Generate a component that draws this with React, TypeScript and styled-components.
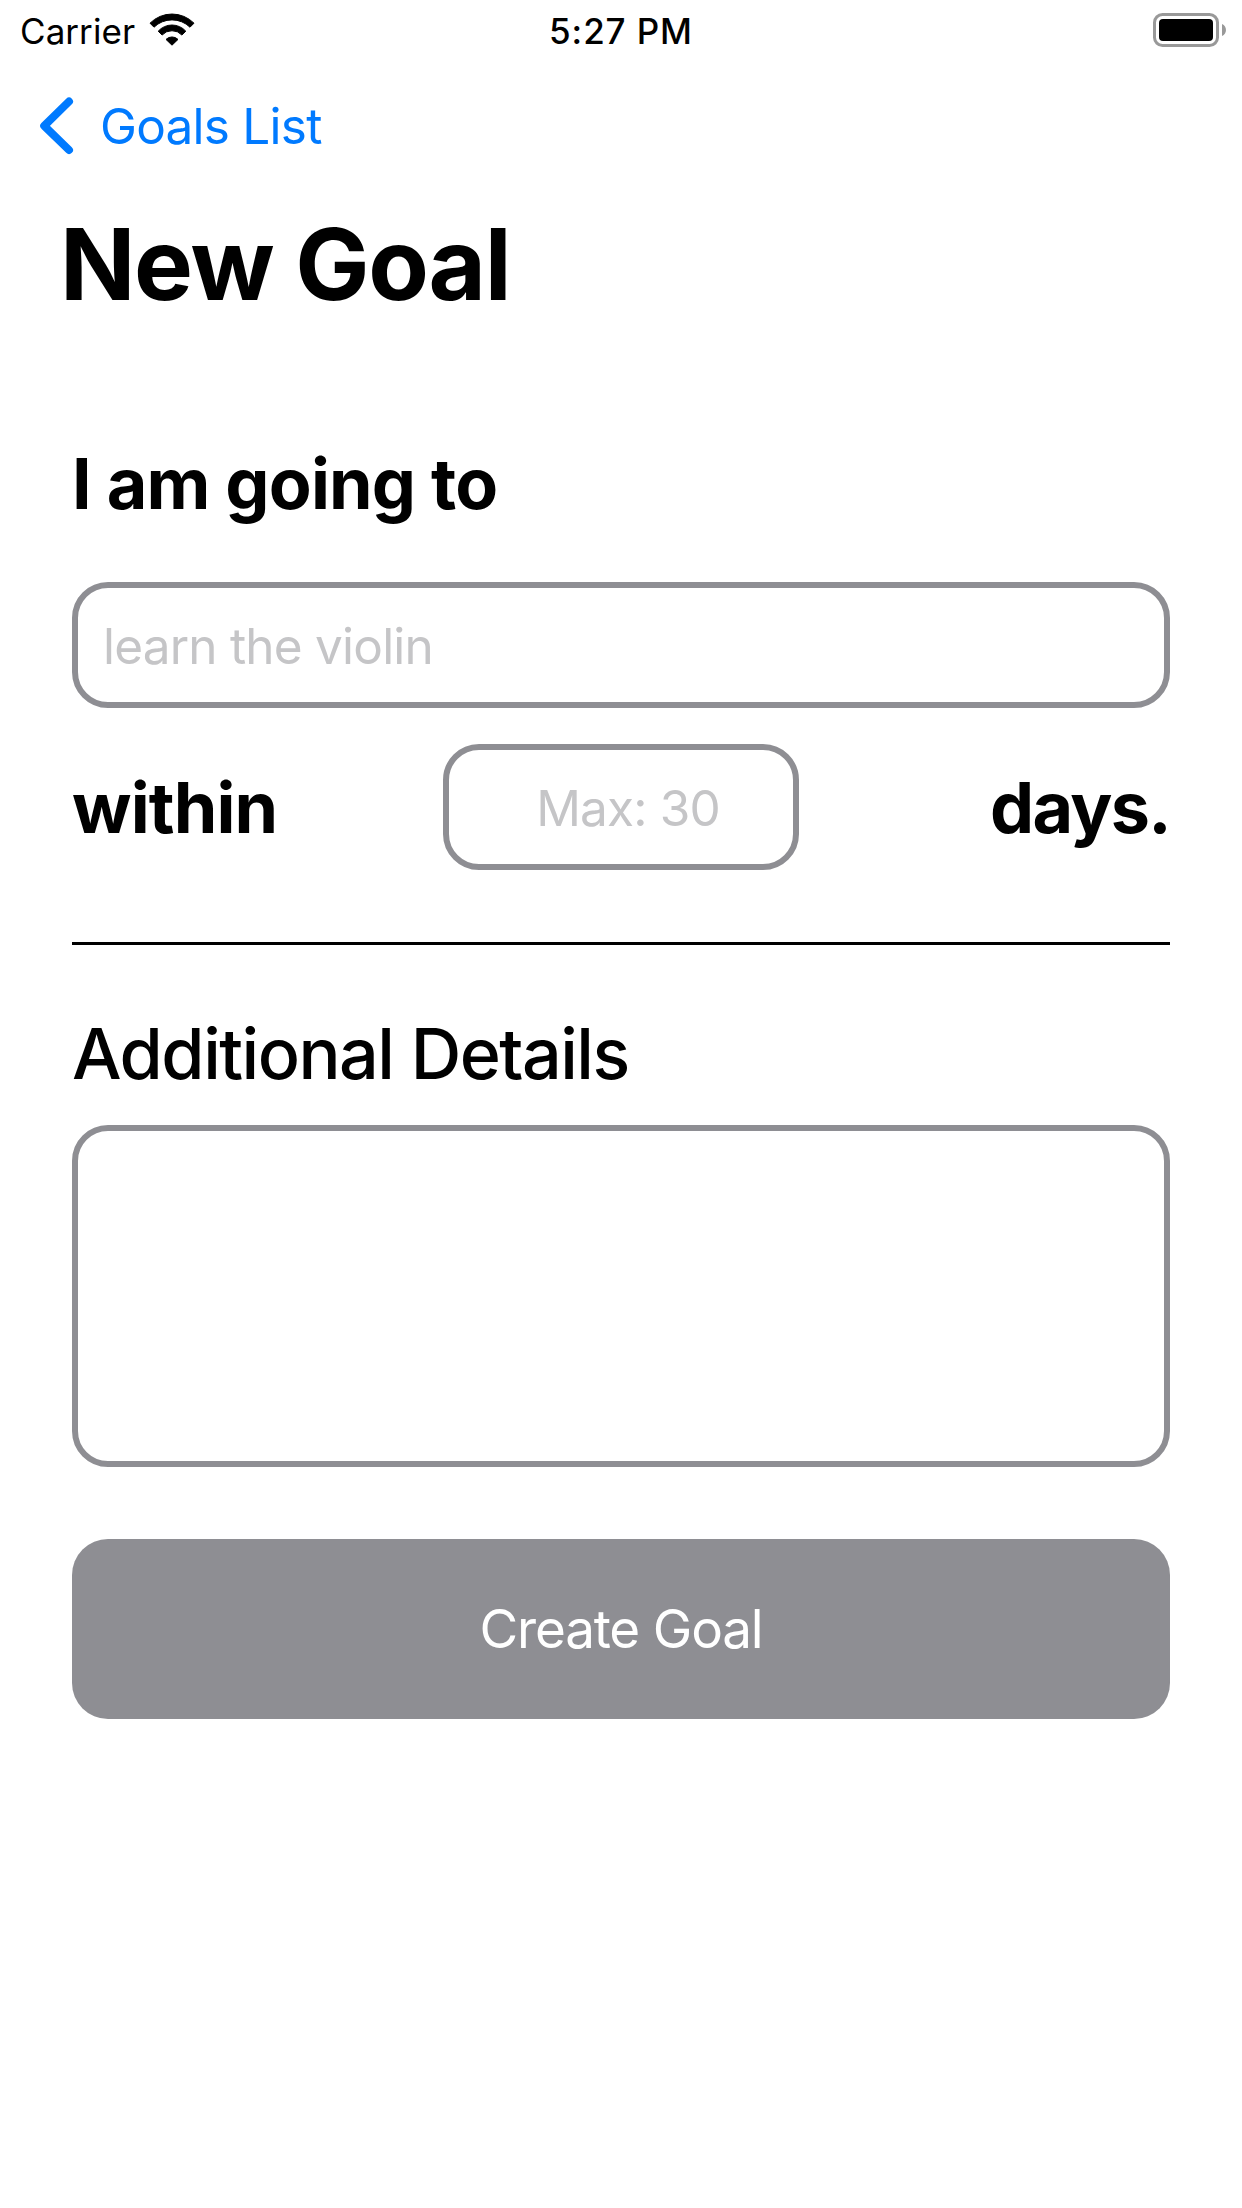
import React from "react";
import styled, { createGlobalStyle } from "styled-components";

const GlobalStyle = createGlobalStyle`
  *, *::before, *::after { box-sizing: border-box; }
  body {
    margin: 0;
    background: #ffffff;
    color: #000000;
    font-family: "Inter", "Liberation Sans", sans-serif;
    font-kerning: normal;
  }
`;

const gray = "#8e8e93";

const Screen = styled.div`
  display: flex;
  flex-direction: column;
  width: 1242px;
  height: 2208px;
  background: #ffffff;
  overflow: hidden;
`;

const StatusBar = styled.header`
  display: grid;
  grid-template-columns: 1fr auto 1fr;
  height: 62px;
  padding: 0 16px;
  font-size: 35px;
  line-height: 62px;
`;

const Carrier = styled.div`
  display: flex;
  align-items: center;
  gap: 14px;
  padding-left: 4px;
  letter-spacing: 0.06px;
`;

const Clock = styled.time`
  font-weight: 500;
  letter-spacing: 0.9px;
`;

const BatterySlot = styled.div`
  display: flex;
  justify-content: flex-end;
  padding-top: 12px;
`;

const WifiIcon = styled.svg`
  display: block;
  width: 46px;
  height: 34px;
  margin-bottom: 3px;
`;

const BatteryIcon = styled.svg`
  display: block;
  width: 74px;
  height: 36px;
`;

const NavBar = styled.nav`
  display: flex;
  height: 128px;
  padding-left: 38px;
`;

const BackButton = styled.button`
  display: flex;
  align-items: center;
  gap: 24px;
  padding: 0;
  border: 0;
  background: none;
  color: #007aff;
  font: inherit;
  font-size: 49.5px;
  line-height: 128px;
  letter-spacing: -0.76px;
`;

const Chevron = styled.svg`
  display: block;
  width: 38px;
  height: 60px;
`;

const Title = styled.h1`
  margin: 14px 0 0 60px;
  font-size: 99px;
  font-weight: 700;
  line-height: 120px;
  letter-spacing: -1.35px;
`;

const Form = styled.form`
  display: flex;
  flex-direction: column;
  padding: 117px 72px 0;
`;

const Prompt = styled.label<{ $tracking: number; $weight?: number; $align?: "start" | "end" }>`
  justify-self: ${(p) => p.$align ?? "start"};
  font-size: 70px;
  font-weight: ${(p) => p.$weight ?? 700};
  line-height: 85px;
  letter-spacing: ${(p) => p.$tracking}px;
`;

const Field = styled.input<{ $centered?: boolean; $tracking: number }>`
  width: ${(p) => (p.$centered ? "356px" : "100%")};
  height: 126px;
  padding: ${(p) => (p.$centered ? "2px 18px 0 32px" : "2px 25px 0")};
  border: 6px solid ${gray};
  border-radius: 36px;
  outline: none;
  background: #ffffff;
  font: inherit;
  font-size: 49.5px;
  letter-spacing: ${(p) => p.$tracking}px;
  text-align: ${(p) => (p.$centered ? "center" : "left")};

  &::placeholder {
    color: #c5c5c7;
    opacity: 1;
  }
`;

const GoalGroup = styled.div`
  display: flex;
  flex-direction: column;
  gap: 56px;
`;

const DeadlineRow = styled.div`
  display: grid;
  grid-template-columns: 1fr auto 1fr;
  align-items: center;
  margin-top: 36px;
`;

const Divider = styled.hr`
  flex: none;
  width: 100%;
  height: 3px;
  margin: 72px 0 66px;
  border: 0;
  background: #000000;
`;

const DetailsGroup = styled.div`
  display: flex;
  flex-direction: column;
  gap: 29px;
`;

const Details = styled.textarea`
  display: block;
  width: 100%;
  height: 342px;
  padding: 24px;
  border: 6px solid ${gray};
  border-radius: 36px;
  outline: none;
  resize: none;
  background: #ffffff;
  font: inherit;
  font-size: 49.5px;
`;

const SubmitButton = styled.button`
  height: 180px;
  margin-top: 72px;
  padding: 0;
  border: 0;
  border-radius: 36px;
  background: ${gray};
  color: #ffffff;
  font: inherit;
  font-size: 53px;
  line-height: 180px;
  letter-spacing: -1.18px;
`;

export default function App() {
  return (
    <>
      <GlobalStyle />
      <Screen>
        <StatusBar>
          <Carrier>
            <span>Carrier</span>
            <WifiIcon viewBox="149 13 46 34" aria-hidden="true">
              <g stroke="#000" strokeWidth="1" strokeLinejoin="round">
                <path d="M150 22.8A31 31 0 0 1 194 22.8L190 26.8A25.8 25.8 0 0 0 154 26.8Z" transform="translate(0 .4)" />
                <path d="M158.2 31.2A18.5 18.5 0 0 1 185.8 31.2L181.9 35A13.6 13.6 0 0 0 162.1 35Z" />
                <path d="M166 39.4A8.6 8.6 0 0 1 178 39.4L172 45.2Z" />
              </g>
            </WifiIcon>
          </Carrier>
          <Clock>5:27 PM</Clock>
          <BatterySlot>
            <BatteryIcon viewBox="1152 12 74 36" aria-hidden="true">
              <rect x="1154.5" y="14.5" width="63" height="31" rx="8" fill="none" stroke="#999" strokeWidth="3" />
              <rect x="1159" y="19" width="54" height="22" rx="4" />
              <path d="M1222 24C1227.3 26 1227.3 34 1222 36Z" fill="#999" />
            </BatteryIcon>
          </BatterySlot>
        </StatusBar>

        <NavBar>
          <BackButton type="button">
            <Chevron viewBox="38 96 38 60" fill="none" aria-hidden="true">
              <path d="M69 101.5L44.2 125.8L69 150" stroke="#007aff" strokeWidth="8" strokeLinecap="round" strokeLinejoin="round" />
            </Chevron>
            <span>Goals List</span>
          </BackButton>
        </NavBar>

        <Title>New Goal</Title>

        <Form>
          <GoalGroup>
            <Prompt htmlFor="goal" $tracking={-0.8}>I am going to</Prompt>
            <Field id="goal" placeholder="learn the violin" $tracking={-0.79} />
          </GoalGroup>
          <DeadlineRow>
            <Prompt htmlFor="days" $tracking={-0.85}>within</Prompt>
            <Field id="days" placeholder="Max: 30" $centered $tracking={-0.85} />
            <Prompt as="span" $tracking={-1.65} $align="end">days.</Prompt>
          </DeadlineRow>
          <Divider />
          <DetailsGroup>
            <Prompt htmlFor="details" $weight={500} $tracking={-1.5}>Additional Details</Prompt>
            <Details id="details" />
          </DetailsGroup>
          <SubmitButton type="button">Create Goal</SubmitButton>
        </Form>
      </Screen>
    </>
  );
}
